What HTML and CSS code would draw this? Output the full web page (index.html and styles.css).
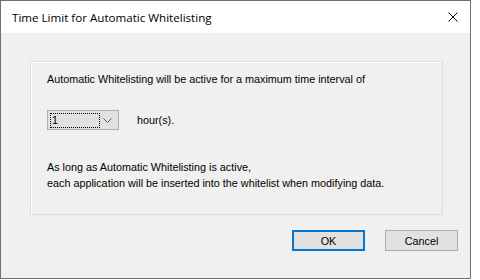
FILE: index.html
```html
<!DOCTYPE html>
<html lang="en">
<head>
    <meta charset="UTF-8">
    <title>Time Limit for Automatic Whitelisting</title>
    <link rel="stylesheet" href="styles.css">
</head>
<body>
    <div class="window">
        <div class="titlebar">
            <span class="title">Time Limit for Automatic Whitelisting</span>
            <svg class="close" width="10" height="10" viewBox="0 0 10 10">
                <path d="M0.5 0.5 L9.5 9.5 M9.5 0.5 L0.5 9.5" stroke="#000" stroke-width="1" fill="none"/>
            </svg>
        </div>
        <div class="content">
            <div class="group">
                <p class="line">Automatic Whitelisting will be active for a maximum time interval of</p>
                <div class="row">
                    <div class="combo">
                        <span class="combo-value">1</span>
                        <svg class="combo-arrow" width="9" height="5" viewBox="0 0 9 5">
                            <path d="M0.5 0.5 L4.5 4.5 L8.5 0.5" stroke="#555" stroke-width="1" fill="none"/>
                        </svg>
                    </div>
                    <span class="unit">hour(s).</span>
                </div>
                <p class="note">As long as Automatic Whitelisting is active,<br>each application will be inserted into the whitelist when modifying data.</p>
            </div>
            <div class="buttons">
                <button class="btn default">OK</button>
                <button class="btn">Cancel</button>
            </div>
        </div>
    </div>
</body>
</html>
```

FILE: styles.css
```css
body {
    margin: 0;
    background-color: #fff;
    font-family: "Liberation Sans", Arial, sans-serif;
    font-size: 10.8px;
    color: #000;
}
.window {
    width: 469px;
    height: 277px;
    border: 1px solid #707070;
    background-color: #f0f0f0;
    display: flex;
    flex-direction: column;
}
.titlebar {
    height: 32px;
    background-color: #fff;
    display: flex;
    align-items: center;
    justify-content: space-between;
    padding: 0 12px 0 11px;
}
.title {
    font-family: "Open Sans", "Noto Sans", sans-serif;
    font-size: 11.6px;
}
.content {
    flex: 1;
    padding: 28px 0 0 29px;
}
.group {
    height: 154px;
    margin-right: 27px;
    border: 1px solid #dcdcdc;
    box-shadow: inset 1px 1px 0 #fff;
    padding: 0 0 0 16px;
    box-sizing: border-box;
}
.line {
    margin: 9px 0 0 0;
    line-height: 16px;
}
.row {
    display: flex;
    align-items: center;
    margin-top: 23px;
}
.combo {
    width: 62px;
    height: 18px;
    border: 1px solid #adadad;
    background-color: #e1e1e1;
    display: flex;
    align-items: center;
    justify-content: space-between;
    padding: 0 6px 0 2px;
}
.combo-value {
    width: 47px;
    height: 13px;
    border: 1px dotted #000;
    line-height: 13px;
    padding-left: 1px;
}
.unit {
    margin-left: 18px;
}
.note {
    margin: 29px 0 0 0;
    line-height: 16px;
}
.buttons {
    display: flex;
    justify-content: flex-end;
    gap: 20px;
    margin-top: 15px;
    padding-right: 12px;
}
.btn {
    width: 73px;
    height: 21px;
    border: 1px solid #adadad;
    background-color: #e1e1e1;
    font-family: "Liberation Sans", Arial, sans-serif;
    font-size: 10.8px;
    color: #000;
    padding: 0;
}
.btn.default {
    border: 2px solid #0078d7;
}
```
